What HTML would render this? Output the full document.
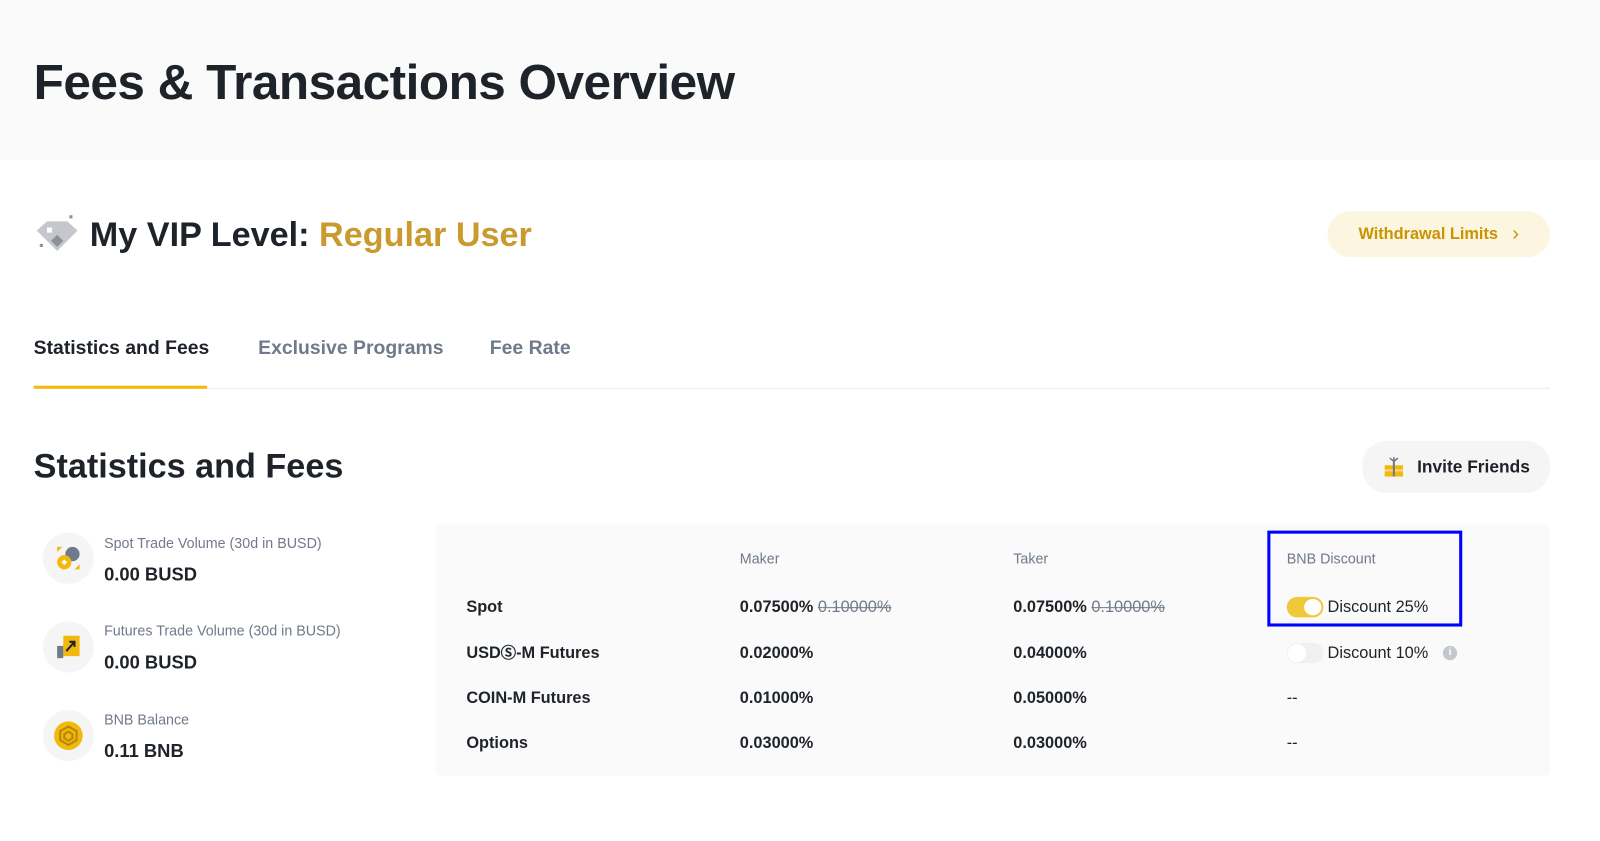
<!DOCTYPE html><html><head><meta charset="utf-8"><style>
*{margin:0;padding:0;box-sizing:border-box}
body{width:1600px;height:840px;background:#fff;font-family:"Liberation Sans",Arial,sans-serif;color:#1e2329;overflow:hidden}
#w{position:absolute;left:0;top:0;width:1568px;height:824px;transform:scale(1.0204);transform-origin:0 0}
.a{position:absolute;white-space:nowrap;line-height:1.2}
.hdr{position:absolute;left:0;top:0;width:1568px;height:157px;background:#fafafa}
.g{color:#707a8a}
.btn{position:absolute;border-radius:24px;display:flex;align-items:center;justify-content:center}
.ic{position:absolute;width:50px;height:50px;border-radius:50%;background:#f5f5f5}
.lab{font-size:14px;color:#707a8a}
.val{font-size:18px;font-weight:bold;color:#1e2329}
.t{font-size:16px;font-weight:bold;height:20px}
.s{color:#707a8a;text-decoration:line-through;font-weight:normal}
</style></head><body><div id="w">
<div class="hdr"></div>
<div class="a" style="left:33px;top:52px;font-size:48.5px;font-weight:bold;letter-spacing:-0.5px">Fees &amp; Transactions Overview</div>

<svg class="a" style="left:34px;top:210px" width="44" height="40" viewBox="0 0 44 40"><polygon points="2,16 12,7 32,7 42,16 22,36" fill="#c5c7cc"/><polygon points="22,20 28,26 22,32 16,26" fill="#8a8f99"/><rect x="12" y="13" width="5" height="5" fill="#fff"/><rect x="34" y="1" width="3" height="3" fill="#8a8f99"/><rect x="5" y="29" width="3" height="3" fill="#8a8f99"/></svg>
<div class="a" style="left:88px;top:211px;font-size:33.5px;font-weight:bold">My VIP Level: <span style="color:#c99a2e">Regular User</span></div>
<div class="btn" style="left:1301px;top:207px;width:218px;height:45px;background:#fcf5df;color:#c99400;font-size:16px;font-weight:bold">Withdrawal Limits <span style="margin-left:14px;font-size:20px;font-weight:normal">&#x203A;</span></div>

<div class="a" style="left:33px;top:331px;font-size:19px;font-weight:bold">Statistics and Fees</div>
<div class="a g" style="left:253px;top:331px;font-size:19px;font-weight:bold">Exclusive Programs</div>
<div class="a g" style="left:480px;top:331px;font-size:19px;font-weight:bold">Fee Rate</div>
<div class="a" style="left:33px;top:380px;width:1486px;height:1px;background:#eaecef"></div>
<div class="a" style="left:33px;top:378px;width:170px;height:3px;background:#f0b90b"></div>

<div class="a" style="left:33px;top:438px;font-size:33.5px;font-weight:bold">Statistics and Fees</div>
<div class="btn" style="left:1335px;top:432px;width:184px;height:51px;background:#f5f5f5;font-size:17px;font-weight:bold"><svg width="22" height="22" viewBox="0 0 22 22" style="margin-right:12px"><rect x="2" y="9" width="18" height="11" fill="#f0b90b"/><rect x="1" y="13" width="20" height="2" fill="#fff" opacity=".5"/><rect x="10" y="5" width="2" height="15" fill="#707a8a"/><path d="M11 5 L7 2 M11 5 L15 2 M11 5 L11 1" stroke="#707a8a" stroke-width="1.5"/></svg>Invite Friends</div>

<div class="ic" style="left:42px;top:522px"></div>
<svg class="a" style="left:54px;top:534px" width="26" height="26" viewBox="0 0 26 26"><circle cx="17" cy="9" r="7" fill="#707a8a"/><circle cx="9" cy="17" r="7" fill="#f0b90b"/><rect x="7" y="15" width="4" height="4" fill="#fff" transform="rotate(45 9 17)"/><path d="M2 2h5L2 7z M24 24h-5l5-5z" fill="#f0b90b"/></svg>
<div class="a lab" style="left:102px;top:524px">Spot Trade Volume (30d in BUSD)</div>
<div class="a val" style="left:102px;top:553px">0.00 BUSD</div>

<div class="ic" style="left:42px;top:609px"></div>
<svg class="a" style="left:54px;top:621px" width="26" height="26" viewBox="0 0 26 26"><rect x="8" y="2" width="16" height="20" fill="#f0b90b"/><rect x="2" y="12" width="6" height="12" fill="#707a8a"/><path d="M11 17 L19 8 M14 8h5v5" stroke="#1e2329" stroke-width="2" fill="none"/></svg>
<div class="a lab" style="left:102px;top:610px">Futures Trade Volume (30d in BUSD)</div>
<div class="a val" style="left:102px;top:639px">0.00 BUSD</div>

<div class="ic" style="left:42px;top:696px"></div>
<svg class="a" style="left:52px;top:706px" width="30" height="30" viewBox="0 0 30 30"><circle cx="15" cy="15" r="14" fill="#f0b90b"/><path d="M15 6l8 4.5v9L15 24l-8-4.5v-9z" fill="none" stroke="#b8860b" stroke-width="2"/><path d="M15 11l4 2.5v4L15 20l-4-2.5v-4z" fill="none" stroke="#b8860b" stroke-width="2"/></svg>
<div class="a lab" style="left:102px;top:697px">BNB Balance</div>
<div class="a val" style="left:102px;top:726px">0.11 BNB</div>

<div class="a" style="left:427px;top:514px;width:1092px;height:246px;background:#fafafa;border-radius:4px"></div>
<div class="a g" style="left:725px;top:539px;font-size:14px">Maker</div>
<div class="a g" style="left:993px;top:539px;font-size:14px">Taker</div>
<div class="a g" style="left:1261px;top:539px;font-size:14px">BNB Discount</div>

<div class="a t" style="left:457px;top:586px">Spot</div>
<div class="a t" style="left:725px;top:586px">0.07500% <span class="s">0.10000%</span></div>
<div class="a t" style="left:993px;top:586px">0.07500% <span class="s">0.10000%</span></div>
<div class="a" style="left:1261px;top:585px;width:36px;height:20px;border-radius:10px;background:#f0c93b"></div>
<div class="a" style="left:1278px;top:587px;width:17px;height:16px;border-radius:50%;background:#fff"></div>
<div class="a" style="left:1301px;top:586px;font-size:16px">Discount 25%</div>

<div class="a t" style="left:457px;top:631px">USD<span style="font-size:15px">Ⓢ</span>-M Futures</div>
<div class="a t" style="left:725px;top:631px">0.02000%</div>
<div class="a t" style="left:993px;top:631px">0.04000%</div>
<div class="a" style="left:1261px;top:630px;width:36px;height:20px;border-radius:10px;background:#f0f0f0"></div>
<div class="a" style="left:1262px;top:631px;width:18px;height:18px;border-radius:50%;background:#fff"></div>
<div class="a" style="left:1301px;top:631px;font-size:16px">Discount 10%</div>
<div class="a" style="left:1414px;top:633px;width:14px;height:14px;border-radius:50%;background:#c4c7cc;color:#fff;font-size:10px;font-weight:bold;text-align:center;line-height:14px">i</div>

<div class="a t" style="left:457px;top:675px">COIN-M Futures</div>
<div class="a t" style="left:725px;top:675px">0.01000%</div>
<div class="a t" style="left:993px;top:675px">0.05000%</div>
<div class="a" style="left:1261px;top:675px;font-size:16px">--</div>

<div class="a t" style="left:457px;top:719px">Options</div>
<div class="a t" style="left:725px;top:719px">0.03000%</div>
<div class="a t" style="left:993px;top:719px">0.03000%</div>
<div class="a" style="left:1261px;top:719px;font-size:16px">--</div>

<div class="a" style="left:1242px;top:520px;width:191px;height:94px;border:3px solid #0000ff"></div>
</div></body></html>
